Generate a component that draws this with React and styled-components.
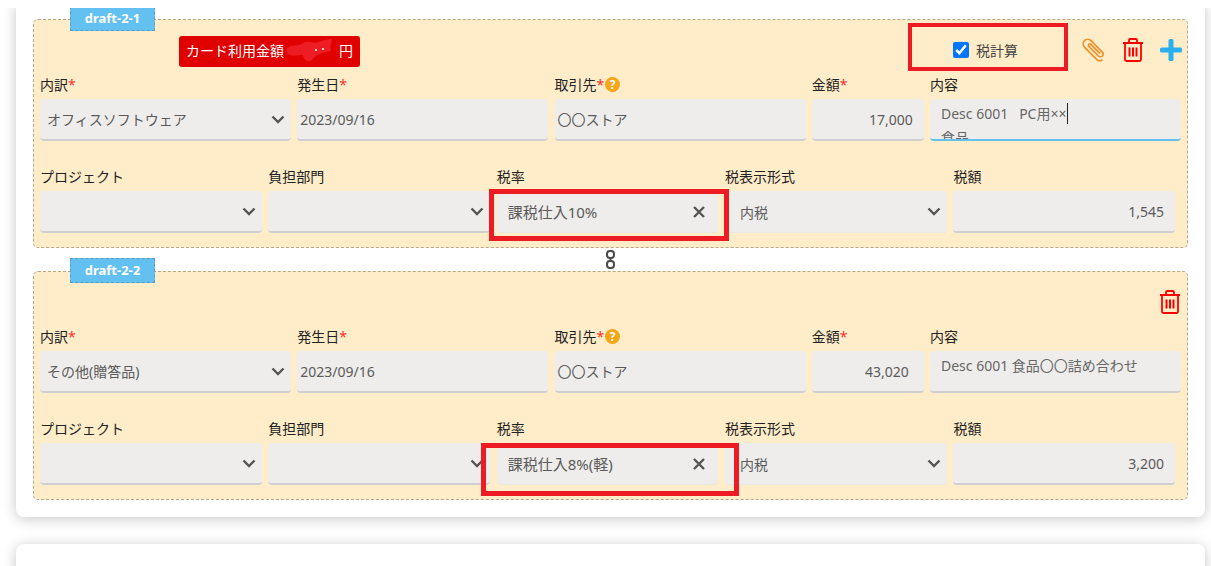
import React from "react";
import styled, { createGlobalStyle } from "styled-components";

const Global = createGlobalStyle`
  html, body { margin: 0; padding: 0; height: 566px; overflow: hidden; background: #fff; }
  body { font-family: "Noto Sans", "Noto Sans CJK JP", sans-serif; }
  * { box-sizing: border-box; }
`;
const Page = styled.div`position: relative; width: 1211px; height: 566px; overflow: hidden; background: #fff;`;
const TopBar = styled.div`position: absolute; z-index: 5; left: 0; top: 0; width: 100%; height: 8px; background: #fff;`;
const Content = styled.main`display: flex; flex-direction: column; gap: 27px; padding: 0 6px 0 16px;`;
const Card = styled.section`
  background: #fff; border-radius: 8px; box-shadow: 0 2px 14px rgba(0,0,0,.22);
  padding: 19px 17px 17px 17px; height: 517px; flex: none;
`;
const EmptyCard = styled(Card)`height: 200px;`;
const Panel = styled.div`
  position: relative; height: 229px; background: #ffecc8; border: 1px dashed #b3a890; border-radius: 5px;
  padding-left: 6px;
`;
const Tag = styled.div`
  position: absolute; left: 36px; top: -14px; width: 85px; height: 25px; background: #63c1f1;
  border: 1px dashed #5d9cc0; color: #fff; font: 700 13px/23px "Noto Sans", sans-serif; text-align: center;
`;
const Header = styled.div`height: 56px; display: flex; align-items: center; padding-top: 4px; position: relative;`;
const Badge = styled.div`
  position: relative; margin-left: 139px; width: 181px; height: 31px; background: #e00000; border-radius: 3px; color: #fff;
  font-size: 14px; line-height: 29px; padding-left: 7px; white-space: nowrap; margin-top: 2px;
`;
const Yen = styled.span`position: absolute; right: 7px; top: 0;`;
const Blob = styled.svg`position: absolute; left: 106px; top: 2px;`;
const Actions = styled.div`margin-left: auto; display: flex; align-items: center; padding-right: 5px;`;
const TaxCheck = styled.label`display: flex; align-items: center; gap: 7px; width: 160px; padding-left: 47px; font-size: 14px; color: #444; margin-right: 16px;`;
const Check = styled.input`width: 16px; height: 16px; margin: 0; accent-color: #0075ff;`;
const IconRow = styled.div`display: flex; align-items: center; gap: 16px;`;
const TrashOnly = styled.div`display: flex; justify-content: flex-end; padding-right: 6px; width: 100%; padding-bottom: 0;`;
const Row = styled.div`
  display: grid; grid-template-columns: ${p => p.$cols}; column-gap: ${p => p.$gap}px;
  width: ${p => p.$width}px; margin-bottom: 27px;
`;
const Col = styled.div`display: flex; flex-direction: column; min-width: 0;`;
const Label = styled.div`height: 23px; font-size: 14px; line-height: 18px; color: #222; white-space: nowrap; display: flex; align-items: flex-start;`;
const Req = styled.span`color: #f33;`;
const Help = styled.span`
  width: 15px; height: 15px; border-radius: 50%; background: #f5a516; color: #fff; font: 700 12px/15px "Noto Sans", sans-serif;
  text-align: center; margin: 1px 0 0 1px;
`;
const Field = styled.div`
  position: relative; height: 42px; background: #eeedeb; border-radius: 4px; overflow: hidden;
  border-bottom: 2px solid ${p => p.$line === "focus" ? "#63c1ec" : p.$line === "flat" ? "#e4e2dc" : "#cfcfcf"};
  ${p => p.$line === "flat" ? "border-bottom-width: 1px; border-bottom-style: dotted;" : ""}
  display: flex; align-items: center; justify-content: ${p => p.$right ? "flex-end" : "space-between"};
  padding: 0 ${p => p.$pr ?? 6}px 0 ${p => p.$pl ?? 7}px;
  color: #5a5a5a; font-size: 14px; white-space: nowrap;
`;
const MultiText = styled.div`
  position: absolute; left: 11px; top: ${p => p.$top}px; font-size: 14px; line-height: 24px; color: #666; white-space: nowrap;
`;
const Caret = styled.span`display: inline-block; width: 1px; height: 21px; background: #222; vertical-align: -5px; margin-left: 1px;`;
const BigText = styled.span`font-size: 15px;`;
const Connector = styled.div`height: 23px; display: flex; align-items: center; justify-content: center; padding-right: 0;`;
const RedBox = styled.div`
  position: absolute; z-index: 4; left: ${p => p.$x}px; top: ${p => p.$y}px; width: ${p => p.$w}px; height: ${p => p.$h}px;
  border: ${p => p.$b || 5}px solid #ed1c24; pointer-events: none;
`;

const Chevron = () => (
  <svg width="14" height="9" viewBox="0 0 14 9" fill="none" stroke="#555" strokeWidth="2.4"><path d="M1.5 1.5 7 7l5.5-5.5" /></svg>
);
const Close = () => (
  <svg width="12" height="12" viewBox="0 0 12 12" fill="none" stroke="#555" strokeWidth="2.4"><path d="M1 1l10 10M11 1 1 11" /></svg>
);
const Trash = () => (
  <svg width="22" height="24" viewBox="0 0 22 24" fill="none" stroke="#f00" strokeWidth="1.8">
    <path d="M1 5h20M7 5V2.2C7 1.5 7.5 1 8.2 1h5.6c.7 0 1.2.5 1.2 1.2V5" />
    <path d="M3 5v16.5C3 22.3 3.7 23 4.5 23h13c.8 0 1.5-.7 1.5-1.5V5" />
    <path d="M7.5 9.5v9M11 9.5v9M14.5 9.5v9" strokeWidth="2" />
  </svg>
);
const Clip = () => (
  <svg width="24" height="25" viewBox="0 0 24 25" fill="none" stroke="#f0912a" strokeWidth="1.7">
    <path d="M20.5 21.6c-1.6 1.8-4 1.7-5.6.1L2.6 9.3C.7 7.3.8 4.5 2.5 2.7 4.300 .9 7.200 .9 9 2.700l11.300 11.400c1.100 1.100 1 2.900 0 3.900-1.100 1.100-2.800 1.100-3.900 0L6.800 8.300c-.6-.6-.6-1.500 0-2 .6-.6 1.400-.6 2 0l9.200 9.300" />
  </svg>
);
const Plus = () => (
  <svg width="22" height="22" viewBox="0 0 22 22" fill="#2ab0f0"><path d="M8.500 1.500A1.500 1.500 0 0 1 10 0h2a1.500 1.500 0 0 1 1.500 1.500v7h7A1.500 1.500 0 0 1 22 10v2a1.500 1.500 0 0 1-1.500 1.500h-7v7A1.500 1.500 0 0 1 12 22h-2a1.500 1.500 0 0 1-1.500-1.500v-7h-7A1.500 1.500 0 0 1 0 12v-2a1.500 1.500 0 0 1 1.500-1.500h7z" /></svg>
);
const Chain = () => (
  <svg width="9" height="19" viewBox="0 0 9 19" fill="none" stroke="#4a4a4a" strokeWidth="2">
    <rect x="1" y="1" width="7" height="7" rx="3" /><rect x="1" y="11" width="7" height="7" rx="3" /><path d="M4.500 7v5" />
  </svg>
);
const RedactBlob = () => (
  <Blob width="52" height="26" viewBox="0 0 52 26">
    <path d="M2 10C8 6 12 9 18 5c6-3 10 1 16-1 5-2 9-3 13-3l-2 9c3 3-2 4-6 4-4 3-8 2-12 8-5 3-8 0-9-5-5 0-13 2-16-2z" fill="#ee1c25" />
    <circle cx="31" cy="12" r="1" fill="#fff" /><circle cx="38" cy="11" r="1" fill="#fff" />
  </Blob>
);

function Lab({ text, req, help }) {
  return <Label>{text}{req && <Req>*</Req>}{help && <Help>?</Help>}</Label>;
}

function Draft({ tag, first, type, desc, amount, amountPr, tax, rate }) {
  return (
    <Panel>
      <Tag>{tag}</Tag>
      <Header>
        {first ? (
          <>
            <Badge>カード利用金額<RedactBlob /><Yen>円</Yen></Badge>
            <Actions>
              <TaxCheck><Check type="checkbox" defaultChecked readOnly />税計算</TaxCheck>
              <IconRow><Clip /><Trash /><Plus /></IconRow>
            </Actions>
          </>
        ) : (
          <TrashOnly><Trash /></TrashOnly>
        )}
      </Header>
      <Row $cols="251px 251px 251px 112px 251px" $gap={6.25} $width={1141}>
        <Col><Lab text="内訳" req /><Field>{type}<Chevron /></Field></Col>
        <Col><Lab text="発生日" req /><Field $pl={3}>2023/09/16</Field></Col>
        <Col><Lab text="取引先" req help /><Field $pl={3}>〇〇ストア</Field></Col>
        <Col><Lab text="金額" req /><Field $right $pr={amountPr}>{amount}</Field></Col>
        <Col>
          <Lab text="内容" />
          <Field $line={first ? "focus" : undefined}>
            {first ? (
              <MultiText $top={3}>Desc 6001 &nbsp; PC用××<Caret /><br />食品</MultiText>
            ) : (
              <MultiText $top={3}>{desc}</MultiText>
            )}
          </Field>
        </Col>
      </Row>
      <Row $cols="repeat(5, 1fr)" $gap={6.75} $width={1135}>
        <Col><Lab text="プロジェクト" /><Field $pr={6} $right><Chevron /></Field></Col>
        <Col><Lab text="負担部門" /><Field $pr={6} $right><Chevron /></Field></Col>
        <Col><Lab text="税率" /><Field $line="flat" $pl={11} $pr={13}><BigText>{rate}</BigText><Close /></Field></Col>
        <Col><Lab text="税表示形式" /><Field $line="flat" $pl={15} $pr={6}>内税<Chevron /></Field></Col>
        <Col><Lab text="税額" /><Field $right $pr={11}>{tax}</Field></Col>
      </Row>
    </Panel>
  );
}

export default function App() {
  return (
    <Page>
      <Global />
      <TopBar />
      <Content>
        <Card>
          <Draft tag="draft-2-1" first type="オフィスソフトウェア" amount="17,000" amountPr={11} tax="1,545" rate="課税仕入10%" />
          <Connector><Chain /></Connector>
          <Draft tag="draft-2-2" type="その他(贈答品)" desc="Desc 6001 食品〇〇詰め合わせ" amount="43,020" amountPr={15} tax="3,200" rate="課税仕入8%(軽)" />
        </Card>
        <EmptyCard />
      </Content>
      <RedBox $x={908} $y={23} $w={160} $h={48} $b={4} />
      <RedBox $x={489} $y={189} $w={240} $h={52} />
      <RedBox $x={481} $y={443} $w={258} $h={53} />
    </Page>
  );
}
